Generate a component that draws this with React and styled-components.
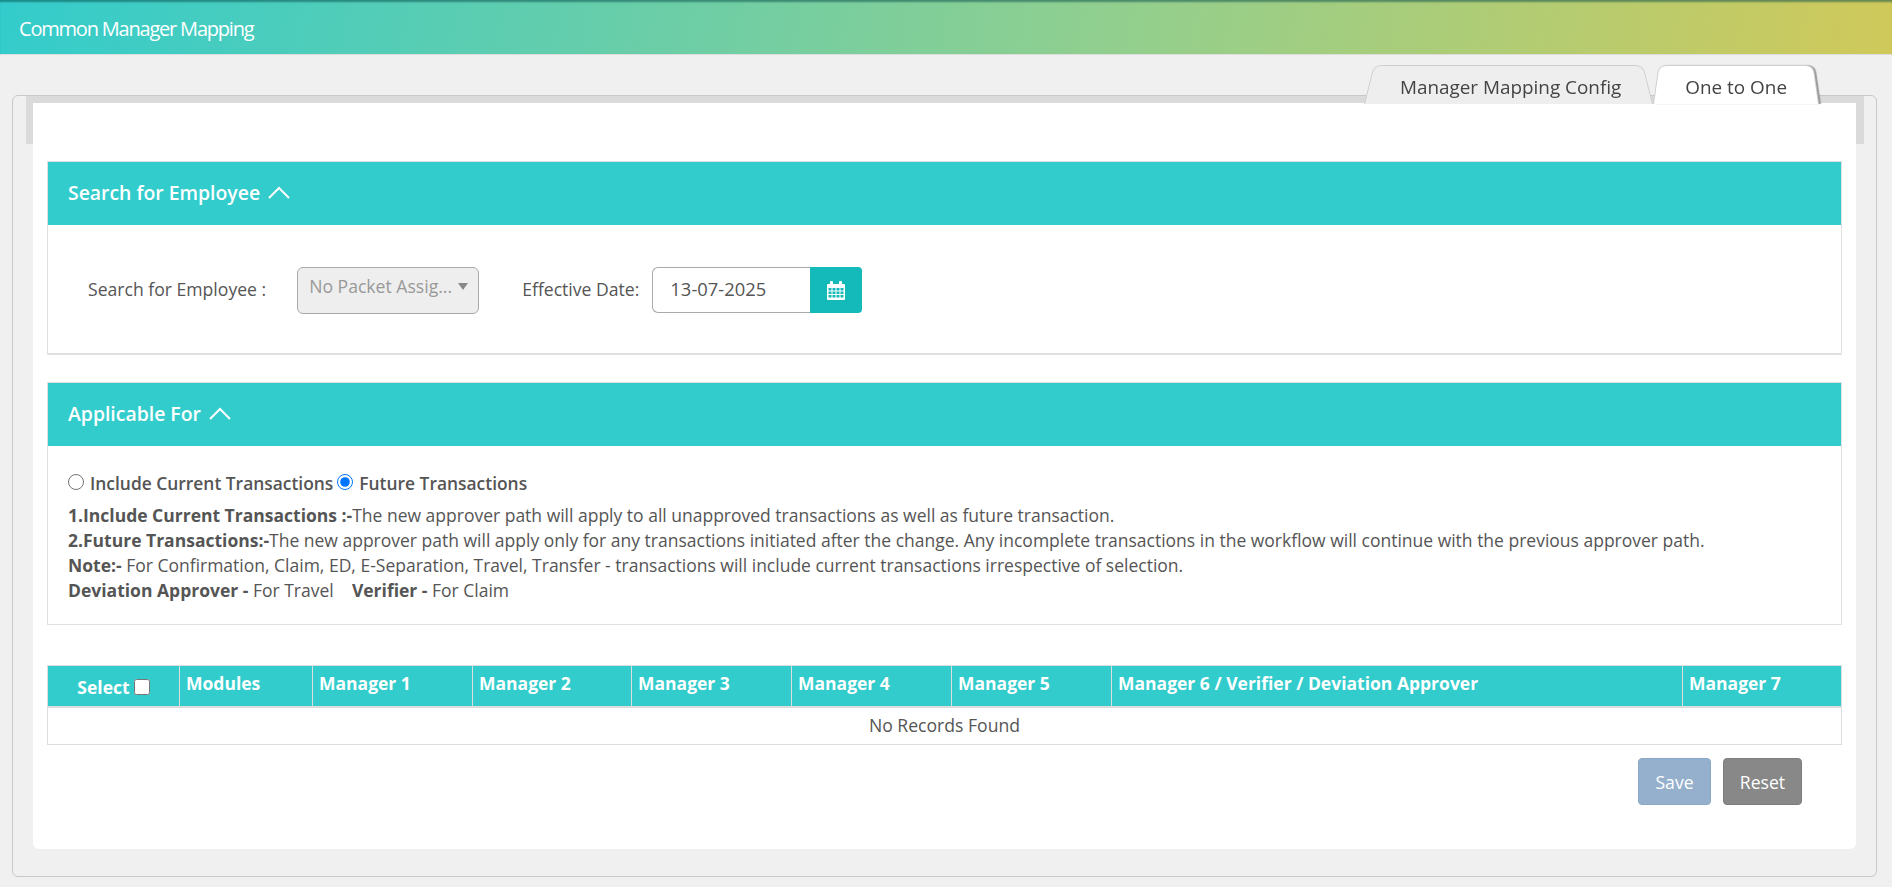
import React from 'react';
import styled, { createGlobalStyle } from 'styled-components';

const GlobalStyle = createGlobalStyle`
  html, body {
    margin: 0;
    background: #f0f0f0;
  }
  body {
    font-family: "Open Sans", "Liberation Sans", sans-serif;
    font-size: 17.5px;
    color: #555;
  }
  * {
    box-sizing: border-box;
  }
`;

const PageHeader = styled.header`
  height: 55px;
  padding: 17px 19px 0;
  border-bottom: 1px solid #dcdcdc;
  background: linear-gradient(100deg, #33cccc 0%, #93cf8d 60%, #d0c95a 100%);
  box-shadow: inset 0 3px 2px -1px rgba(0, 70, 70, 0.5);
  color: #fff;
  font-size: 20px;
  line-height: 24px;
  letter-spacing: -1.2px;
`;

const Frame = styled.div`
  position: relative;
  margin: 40px 15px 10px 12px;
  height: 782px;
  padding: 7px 20px 28px 20px;
  border: 1px solid #c8c8c8;
  border-radius: 6px;
`;

const GreyStrip = styled.div`
  position: absolute;
  top: 0;
  left: 13px;
  right: 12px;
  height: 48px;
  background: #dadada;
`;

const Tabs = styled.div`
  position: absolute;
  top: -34px;
  right: 57px;
  display: flex;
`;

const Tab = styled.div`
  position: relative;
  height: 42px;
  padding: 12px 32px 0 ${(p) => (p.$active ? 32 : 36)}px;
  font-size: 18.9px;
  line-height: 26px;
  color: #444;
  z-index: ${(p) => (p.$active ? 2 : 1)};
  &::before {
    content: '';
    position: absolute;
    inset: 0;
    z-index: -1;
    background: ${(p) => (p.$active ? '#fff' : '#eeeeee')};
    border: 1px solid #cfcfcf;
    border-bottom: 0;
    border-radius: 8px 8px 0 0;
    box-shadow: ${(p) => (p.$active ? '2px 0 1px #9a9a9a' : 'none')};
    transform: perspective(60px) rotateX(6deg);
    transform-origin: bottom;
  }
`;

const Sheet = styled.main`
  position: relative;
  height: 746px;
  padding: 58px 14px 0 14px;
  background: #fff;
  border-radius: 0 0 6px 6px;
`;

const Section = styled.section`
  margin-bottom: ${(p) => p.$gap}px;
  border: 1px solid #e0e0e0;
  border-bottom-width: ${(p) => p.$bottom || 1}px;
  height: ${(p) => p.$height}px;
`;

const SectionTitle = styled.h2`
  display: flex;
  align-items: center;
  gap: 8px;
  height: 63px;
  margin: 0;
  padding: 0 0 2px 20px;
  background: #33cccc;
  color: #fff;
  font-size: 19.4px;
  font-weight: 600;
`;

const SearchRow = styled.div`
  display: flex;
  align-items: flex-start;
  padding-top: 42px;
  padding-left: 40px;
`;

const FieldLabel = styled.label`
  font-size: 17.6px;
  line-height: 24px;
  margin-top: ${(p) => p.$top}px;
  margin-right: ${(p) => p.$right}px;
`;

const SelectBox = styled.div`
  position: relative;
  width: 182px;
  height: 47px;
  margin-right: 43px;
  padding: 6px 0 0 11px;
  background: #eeeeee;
  border: 1px solid #aaa;
  border-radius: 6px;
  color: #999;
  font-size: 17.6px;
  line-height: 24px;
  white-space: nowrap;
  &::after {
    content: '';
    position: absolute;
    top: 15px;
    right: 10px;
    border-left: 5px solid transparent;
    border-right: 5px solid transparent;
    border-top: 7px solid #888;
  }
`;

const DateInput = styled.div`
  width: 158px;
  height: 46px;
  padding: 9px 0 0 17px;
  border: 1px solid #aaa;
  border-right: 0;
  border-radius: 6px 0 0 6px;
  font-size: 18.4px;
  line-height: 24px;
  color: #555;
`;

const CalendarButton = styled.div`
  display: flex;
  align-items: center;
  justify-content: center;
  width: 52px;
  height: 46px;
  background: #14b9b9;
  border-radius: 0 4px 4px 0;
`;

const ApplicableBody = styled.div`
  padding: 25px 20px 0;
`;

const RadioRow = styled.div`
  display: flex;
  align-items: center;
  gap: 4px;
  height: 24px;
  margin-bottom: 8px;
  font-size: 17.4px;
  font-weight: 600;
`;

const RadioOption = styled.label`
  display: flex;
  align-items: center;
  gap: 6px;
`;

const Radio = styled.input`
  width: 16px;
  height: 16px;
  margin: 0 0 3px;
`;

const InfoLine = styled.div`
  line-height: 25px;
  white-space: pre-wrap;
  b {
    font-weight: 700;
  }
`;

const Table = styled.table`
  width: 1794px;
  table-layout: fixed;
  border-collapse: collapse;
`;

const HeadCell = styled.th`
  height: 41px;
  padding: ${(p) => (p.$center ? '3px 0 0' : '0 0 5px 6px')};
  background: #33cccc;
  border: 1px solid #dddddd;
  border-bottom-width: 2px;
  color: #fff;
  font-size: 17.5px;
  font-weight: 700;
  text-align: ${(p) => (p.$center ? 'center' : 'left')};
  white-space: nowrap;
`;

const SelectCheck = styled.input`
  width: 16px;
  height: 16px;
  margin: 0 0 0 4px;
  vertical-align: -1px;
`;

const EmptyCell = styled.td`
  height: 38px;
  padding: 0 0 2px;
  border: 1px solid #dddddd;
  font-size: 17.6px;
  text-align: center;
  color: #555;
`;

const Actions = styled.div`
  display: flex;
  justify-content: flex-end;
  gap: 12px;
  margin-top: 13px;
  padding-right: 40px;
`;

const Button = styled.button`
  width: ${(p) => p.$width}px;
  height: 47px;
  padding: 0;
  background: ${(p) => p.$bg};
  border: 1px solid ${(p) => p.$line};
  border-radius: 4px;
  color: #fff;
  font-family: inherit;
  font-size: 17.6px;
`;

const columns = [
  { label: 'Modules', width: 133 },
  { label: 'Manager 1', width: 160 },
  { label: 'Manager 2', width: 159 },
  { label: 'Manager 3', width: 160 },
  { label: 'Manager 4', width: 160 },
  { label: 'Manager 5', width: 160 },
  { label: 'Manager 6 / Verifier / Deviation Approver', width: 571 },
  { label: 'Manager 7', width: 159 }
];

const ChevronUp = () => (
  <svg width="22" height="13" viewBox="0 0 22 13" fill="none" stroke="#fff" strokeWidth="2">
    <polyline points="1,12 11,2 21,12" />
  </svg>
);

const CalendarIcon = () => (
  <svg width="18" height="19" viewBox="0 0 18 19">
    <path
      fill="#fff"
      fillRule="evenodd"
      d="M0 4q0-1 1-1h2V1q0-1 1-1h1q1 0 1 1v2h6V1q0-1 1-1h1q1 0 1 1v2h2q1 0 1 1v14q0 1-1 1H1q-1 0-1-1z
         M1.5 7v2.5h3V7zM5.5 7v2.5h3V7zM9.5 7v2.5h3V7zM13.5 7v2.5h3V7z
         M1.5 10.5V13h3v-2.5zM5.5 10.5V13h3v-2.5zM9.5 10.5V13h3v-2.5zM13.5 10.5V13h3v-2.5z
         M1.5 14v2.5h3V14zM5.5 14v2.5h3V14zM9.5 14v2.5h3V14zM13.5 14v2.5h3V14z"
    />
  </svg>
);

const App = () => {
  return (
    <>
      <GlobalStyle />
      <PageHeader>Common Manager Mapping</PageHeader>
      <Frame>
        <GreyStrip />
        <Tabs>
          <Tab>Manager Mapping Config</Tab>
          <Tab $active>One to One</Tab>
        </Tabs>
        <Sheet>
          <Section $gap={27} $height={194} $bottom={2}>
            <SectionTitle>
              Search for Employee <ChevronUp />
            </SectionTitle>
            <SearchRow>
              <FieldLabel $top={10} $right={31}>Search for Employee :</FieldLabel>
              <SelectBox>No Packet Assig...</SelectBox>
              <FieldLabel $top={10} $right={13}>Effective Date:</FieldLabel>
              <DateInput>13-07-2025</DateInput>
              <CalendarButton><CalendarIcon /></CalendarButton>
            </SearchRow>
          </Section>
          <Section $gap={40} $height={243}>
            <SectionTitle>
              Applicable For <ChevronUp />
            </SectionTitle>
            <ApplicableBody>
              <RadioRow>
                <RadioOption><Radio type="radio" name="applies" readOnly /> Include Current Transactions</RadioOption>
                <RadioOption><Radio type="radio" name="applies" defaultChecked /> Future Transactions</RadioOption>
              </RadioRow>
              <InfoLine><b>1.Include Current Transactions :-</b>The new approver path will apply to all unapproved transactions as well as future transaction.</InfoLine>
              <InfoLine><b>2.Future Transactions:-</b>The new approver path will apply only for any transactions initiated after the change. Any incomplete transactions in the workflow will continue with the previous approver path.</InfoLine>
              <InfoLine><b>Note:-</b> For Confirmation, Claim, ED, E-Separation, Travel, Transfer - transactions will include current transactions irrespective of selection.</InfoLine>
              <InfoLine><b>Deviation Approver -</b> For Travel    <b>Verifier -</b> For Claim</InfoLine>
            </ApplicableBody>
          </Section>
          <Table>
            <colgroup>
              <col width={132} />
              {columns.map((c) => <col key={c.label} width={c.width} />)}
            </colgroup>
            <thead>
              <tr>
                <HeadCell $center>Select<SelectCheck type="checkbox" /></HeadCell>
                {columns.map((c) => <HeadCell key={c.label}>{c.label}</HeadCell>)}
              </tr>
            </thead>
            <tbody>
              <tr>
                <EmptyCell colSpan={9}>No Records Found</EmptyCell>
              </tr>
            </tbody>
          </Table>
          <Actions>
            <Button $width={73} $bg="#94b0cc" $line="#8aa8c6">Save</Button>
            <Button $width={79} $bg="#888888" $line="#7c7c7c">Reset</Button>
          </Actions>
        </Sheet>
      </Frame>
    </>
  );
};

export default App;
